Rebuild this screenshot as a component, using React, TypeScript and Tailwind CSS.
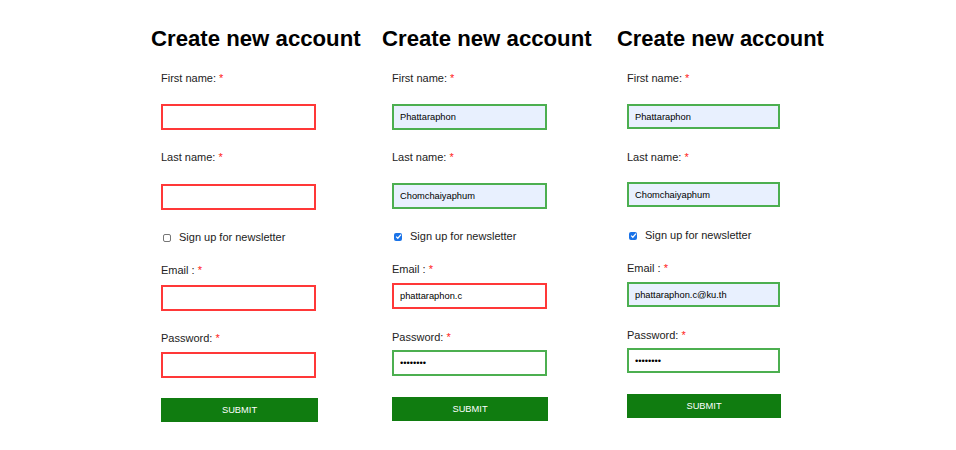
import React from "react";

type Variant = "error" | "ok" | "okFill";

const borderCls: Record<Variant, string> = {
  error: "border-[#ff3838] bg-white",
  ok: "border-[#4caf50] bg-white",
  okFill: "border-[#4caf50] bg-[#e8f0fe]",
};

type Cfg = {
  colW: string;
  titleSize: string;
  inputW: string;
  inputH: string;
  submitW: string;
  mFirst: string;
  mIn1: string;
  mLast: string;
  mIn2: string;
  mCb: string;
  mEmail: string;
  mIn3: string;
  mPw: string;
  mIn4: string;
  mSubmit: string;
  first: string;
  last: string;
  email: string;
  pw: string;
  checked: boolean;
  vFirst: Variant;
  vLast: Variant;
  vEmail: Variant;
  vPw: Variant;
};

function Label({ text, cls }: { text: string; cls: string }) {
  return (
    <div className={`text-[11px] leading-[13px] text-[#222] ${cls}`}>
      {text} <span className="text-[#ff2020]">*</span>
    </div>
  );
}

function Input({
  value,
  type,
  variant,
  cls,
}: {
  value: string;
  type?: string;
  variant: Variant;
  cls: string;
}) {
  return (
    <input
      readOnly
      type={type ?? "text"}
      value={value}
      className={`block border-2 px-[6px] text-[9.3px] text-black outline-none ${borderCls[variant]} ${cls}`}
    />
  );
}

function Column({ c }: { c: Cfg }) {
  return (
    <div className={`shrink-0 pt-[26px] ${c.colW}`}>
      <h1 className={`font-bold leading-[26px] text-black whitespace-nowrap ${c.titleSize}`}>
        Create new account
      </h1>
      <div className="pl-[10px]">
        <Label text="First name:" cls={c.mFirst} />
        <Input value={c.first} variant={c.vFirst} cls={`${c.mIn1} ${c.inputW} ${c.inputH}`} />
        <Label text="Last name:" cls={c.mLast} />
        <Input value={c.last} variant={c.vLast} cls={`${c.mIn2} ${c.inputW} ${c.inputH}`} />
        <div className={`flex items-center gap-[8px] text-[11px] leading-[13px] text-[#222] ${c.mCb}`}>
          {c.checked ? (
            <span className="ml-[2px] flex h-[8px] w-[8px] items-center justify-center rounded-[2px] bg-[#1a73e8]">
              <svg width="7" height="7" viewBox="0 0 8 8">
                <path d="M1.3 4.2 L3.2 6 L6.8 1.8" fill="none" stroke="white" strokeWidth="1.4" />
              </svg>
            </span>
          ) : (
            <span className="ml-[2px] block h-[8px] w-[8px] rounded-[2px] border border-[#767676] bg-white" />
          )}
          <span>Sign up for newsletter</span>
        </div>
        <Label text="Email :" cls={c.mEmail} />
        <Input value={c.email} variant={c.vEmail} cls={`${c.mIn3} ${c.inputW} ${c.inputH}`} />
        <Label text="Password:" cls={c.mPw} />
        <Input value={c.pw} type="password" variant={c.vPw} cls={`${c.mIn4} ${c.inputW} ${c.inputH}`} />
        <button
          className={`block bg-[#107c10] text-center text-[9.3px] leading-[24px] text-white ${c.mSubmit} ${c.submitW} h-[24px]`}
        >
          SUBMIT
        </button>
      </div>
    </div>
  );
}

const cols: Cfg[] = [
  {
    colW: "w-[231px]",
    titleSize: "text-[22.2px]",
    inputW: "w-[155px]",
    inputH: "h-[26px]",
    submitW: "w-[157px]",
    mFirst: "mt-[20px]",
    mIn1: "mt-[19px]",
    mLast: "mt-[21px]",
    mIn2: "mt-[20px]",
    mCb: "mt-[21px]",
    mEmail: "mt-[20px]",
    mIn3: "mt-[8px]",
    mPw: "mt-[21px]",
    mIn4: "mt-[7px]",
    mSubmit: "mt-[20px]",
    first: "",
    last: "",
    email: "",
    pw: "",
    checked: false,
    vFirst: "error",
    vLast: "error",
    vEmail: "error",
    vPw: "error",
  },
  {
    colW: "w-[235px]",
    titleSize: "text-[22.2px]",
    inputW: "w-[155px]",
    inputH: "h-[26px]",
    submitW: "w-[156px]",
    mFirst: "mt-[20px]",
    mIn1: "mt-[19px]",
    mLast: "mt-[21px]",
    mIn2: "mt-[19px]",
    mCb: "mt-[21px]",
    mEmail: "mt-[20px]",
    mIn3: "mt-[7px]",
    mPw: "mt-[22px]",
    mIn4: "mt-[6px]",
    mSubmit: "mt-[21px]",
    first: "Phattaraphon",
    last: "Chomchaiyaphum",
    email: "phattaraphon.c",
    pw: "12345678",
    checked: true,
    vFirst: "okFill",
    vLast: "okFill",
    vEmail: "error",
    vPw: "ok",
  },
  {
    colW: "w-[230px]",
    titleSize: "text-[21.9px]",
    inputW: "w-[153px]",
    inputH: "h-[25px]",
    submitW: "w-[154px]",
    mFirst: "mt-[20px]",
    mIn1: "mt-[19px]",
    mLast: "mt-[22px]",
    mIn2: "mt-[18px]",
    mCb: "mt-[22px]",
    mEmail: "mt-[20px]",
    mIn3: "mt-[7px]",
    mPw: "mt-[22px]",
    mIn4: "mt-[6px]",
    mSubmit: "mt-[21px]",
    first: "Phattaraphon",
    last: "Chomchaiyaphum",
    email: "phattaraphon.c@ku.th",
    pw: "12345678",
    checked: true,
    vFirst: "okFill",
    vLast: "okFill",
    vEmail: "okFill",
    vPw: "ok",
  },
];

export default function App() {
  return (
    <div
      className="flex h-[450px] w-[956px] bg-white pl-[151px]"
      style={{ fontFamily: '"Liberation Sans", Arial, sans-serif' }}
    >
      {cols.map((c, i) => (
        <Column key={i} c={c} />
      ))}
    </div>
  );
}
